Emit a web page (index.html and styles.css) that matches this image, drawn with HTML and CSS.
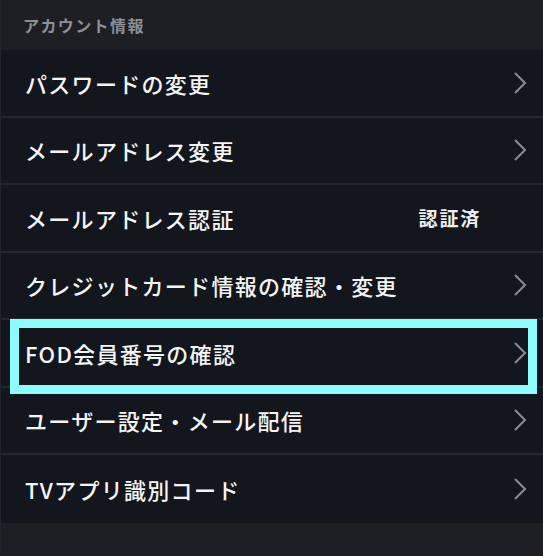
FILE: index.html
```html
<!DOCTYPE html>
<html lang="ja">
<head>
<meta charset="utf-8">
<link rel="stylesheet" href="styles.css">
</head>
<body>
<div class="page">
  <div class="section-title">アカウント情報</div>
  <ul class="menu">
    <li class="item"><span class="label">パスワードの変更</span><svg class="chev" viewBox="0 0 14 24"><polyline points="2,2 12,12 2,22"/></svg></li>
    <li class="item"><span class="label">メールアドレス変更</span><svg class="chev" viewBox="0 0 14 24"><polyline points="2,2 12,12 2,22"/></svg></li>
    <li class="item"><span class="label">メールアドレス認証</span><span class="status">認証済</span></li>
    <li class="item"><span class="label">クレジットカード情報の確認・変更</span><svg class="chev" viewBox="0 0 14 24"><polyline points="2,2 12,12 2,22"/></svg></li>
    <li class="item highlighted"><span class="label">FOD会員番号の確認</span><svg class="chev" viewBox="0 0 14 24"><polyline points="2,2 12,12 2,22"/></svg><span class="focus-box"></span></li>
    <li class="item"><span class="label">ユーザー設定・メール配信</span><svg class="chev" viewBox="0 0 14 24"><polyline points="2,2 12,12 2,22"/></svg></li>
    <li class="item"><span class="label">TVアプリ識別コード</span><svg class="chev" viewBox="0 0 14 24"><polyline points="2,2 12,12 2,22"/></svg></li>
  </ul>
</div>
</body>
</html>
```
FILE: styles.css
```css
html, body {
  margin: 0;
  padding: 0;
  background: #1e1f23;
}
body {
  font-family: "Noto Sans CJK JP", "Noto Sans", sans-serif;
  width: 543px;
  height: 556px;
  overflow: hidden;
}
.page {
  border-left: 1px solid #23252a;
  min-height: 556px;
  box-sizing: border-box;
}
.section-title {
  height: 50px;
  box-sizing: border-box;
  padding-left: 22px;
  display: flex;
  align-items: center;
  font-size: 16px;
  font-weight: 700;
  color: #8b9099;
  letter-spacing: 1.4px;
}
.menu {
  list-style: none;
  margin: 0;
  padding: 0;
  background: #13161d;
}
.item {
  position: relative;
  height: 67.5px;
  box-sizing: border-box;
  border-bottom: 2px solid #25272c;
  display: flex;
  align-items: center;
  justify-content: space-between;
  padding: 0 16px 0 24px;
}
.item:last-child {
  border-bottom: none;
}
.label {
  font-size: 22px;
  font-weight: 500;
  color: #f4f4f4;
  letter-spacing: 1.3px;
}
.status {
  font-size: 19px;
  font-weight: 700;
  color: #eeeeee;
  margin-right: 46px;
  letter-spacing: 1.8px;
}
.chev {
  width: 14px;
  height: 24px;
  fill: none;
  stroke: #8c8c8c;
  stroke-width: 2;
}
.focus-box {
  position: absolute;
  left: 9px;
  top: -1px;
  width: 527px;
  height: 75px;
  box-sizing: border-box;
  border: 9px solid #8cfdfc;
  pointer-events: none;
}
```
